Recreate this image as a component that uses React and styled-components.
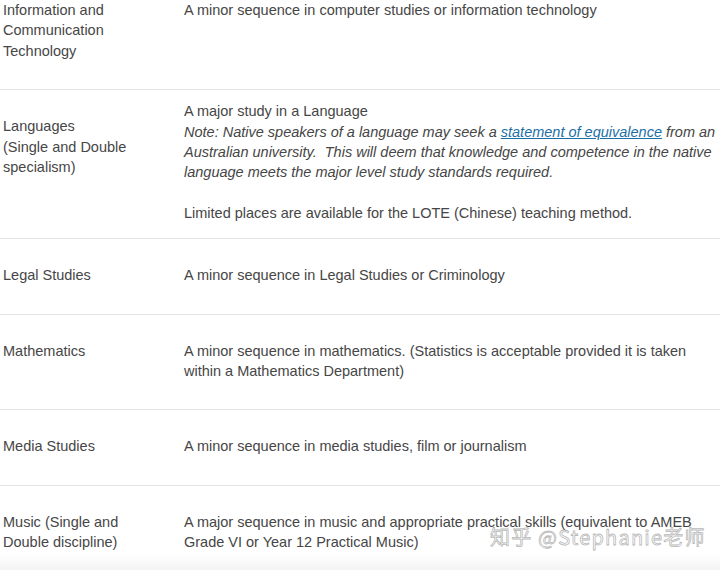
import React from "react";
import styled, { createGlobalStyle } from "styled-components";

const Global = createGlobalStyle`
  html, body { margin: 0; padding: 0; background: #fff; }
  body { font-family: "Liberation Sans", Arial, Helvetica, sans-serif; }
`;

const Page = styled.div`
  position: relative;
  width: 720px;
  height: 570px;
  overflow: hidden;
  background: #fff;
`;

const Table = styled.div`
  display: flex;
  flex-direction: column;
`;

const Row = styled.div`
  display: grid;
  grid-template-columns: 181px 1fr;
  border-bottom: 1px solid #e3e3e3;
  font-size: 14.5px;
  line-height: 20.4px;
  color: #464646;
`;

const Cell = styled.div`
  padding: ${(p) => (p.$top ?? 26)}px 0 ${(p) => (p.$bottom ?? 28)}px 3px;
  padding-right: ${(p) => (p.$label ? "20px" : "0")};
  white-space: nowrap;
`;

const Para = styled.div`
  margin-top: ${(p) => p.$gap || 0}px;
`;

const Note = styled.div`
  font-style: italic;
`;

const Link = styled.a`
  color: #1c6fa6;
  text-decoration: underline;
`;

const Fade = styled.div`
  position: absolute;
  left: 0;
  right: 0;
  bottom: 0;
  height: 16px;
  background: linear-gradient(to bottom, rgba(245, 245, 245, 0), #f4f4f4);
  pointer-events: none;
`;

const Watermark = styled.div`
  position: absolute;
  left: 490px;
  top: 523px;
  font-family: "Noto Sans CJK SC", "Noto Sans", sans-serif;
  font-size: 20px;
  line-height: 28px;
  white-space: nowrap;
  color: rgba(255, 255, 255, 0.55);
  -webkit-text-stroke: 0.8px rgba(110, 110, 110, 0.5);
  letter-spacing: 1.2px;
`;

export default function App() {
  return (
    <Page>
      <Global />
      <Table>
        <Row>
          <Cell $label $top={0}>
            Information and
            <br />
            Communication
            <br />
            Technology
          </Cell>
          <Cell $top={0}>A minor sequence in computer studies or information technology</Cell>
        </Row>
        <Row>
          <Cell $label>
            Languages
            <br />
            (Single and Double
            <br />
            specialism)
          </Cell>
          <Cell $top={11} $bottom={15}>
            <Para>A major study in a Language</Para>
            <Note>
              Note: Native speakers of a language may seek a{" "}
              <Link href="#">statement of equivalence</Link> from an
              <br />
              Australian university.&nbsp; This will deem that knowledge and competence in the native
              <br />
              language meets the major level study standards required.
            </Note>
            <Para $gap={20}>Limited places are available for the LOTE (Chinese) teaching method.</Para>
          </Cell>
        </Row>
        <Row>
          <Cell $label>Legal Studies</Cell>
          <Cell>A minor sequence in Legal Studies or Criminology</Cell>
        </Row>
        <Row>
          <Cell $label>Mathematics</Cell>
          <Cell>
            A minor sequence in mathematics. (Statistics is acceptable provided it is taken
            <br />
            within a Mathematics Department)
          </Cell>
        </Row>
        <Row>
          <Cell $label>Media Studies</Cell>
          <Cell>A minor sequence in media studies, film or journalism</Cell>
        </Row>
        <Row>
          <Cell $label>
            Music (Single and
            <br />
            Double discipline)
          </Cell>
          <Cell>
            A major sequence in music and appropriate practical skills (equivalent to AMEB
            <br />
            Grade VI or Year 12 Practical Music)
          </Cell>
        </Row>
      </Table>
      <Fade />
      <Watermark>知乎 @Stephanie老师</Watermark>
    </Page>
  );
}
